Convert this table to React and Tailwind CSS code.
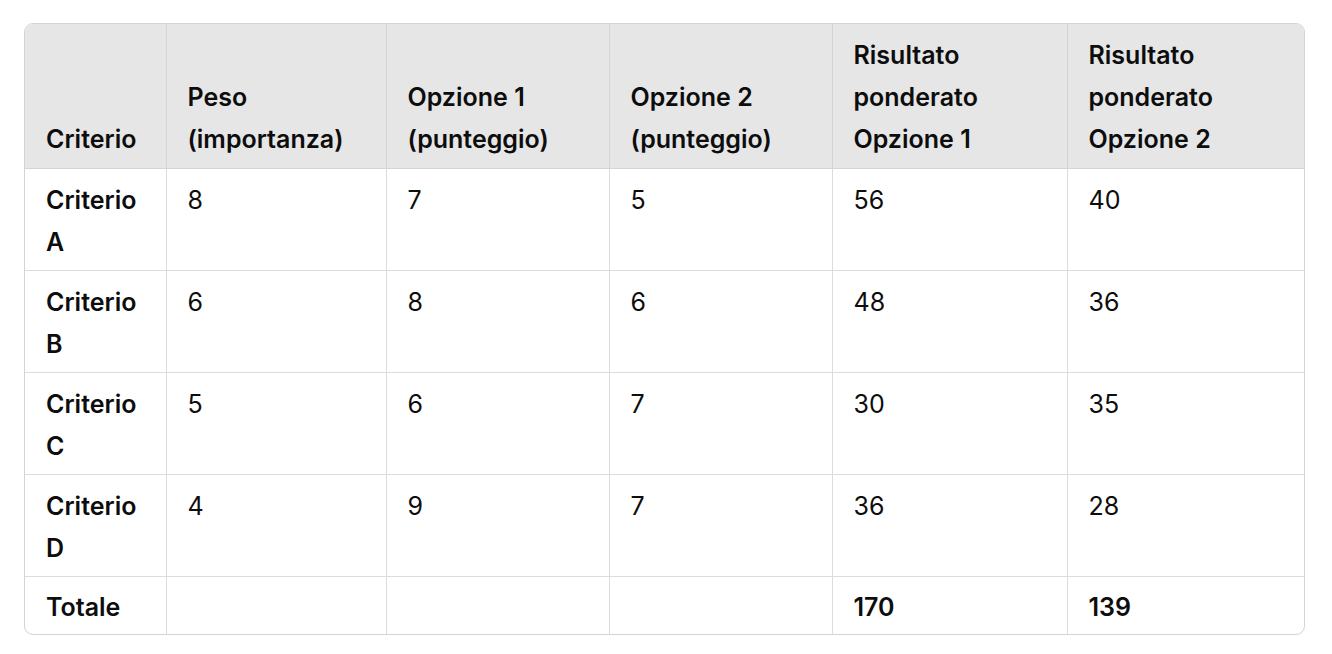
import React from "react";

const headers = [
  ["Criterio"],
  ["Peso", "(importanza)"],
  ["Opzione 1", "(punteggio)"],
  ["Opzione 2", "(punteggio)"],
  ["Risultato", "ponderato", "Opzione 1"],
  ["Risultato", "ponderato", "Opzione 2"],
];

const rows = [
  ["Criterio A", "8", "7", "5", "56", "40"],
  ["Criterio B", "6", "8", "6", "48", "36"],
  ["Criterio C", "5", "6", "7", "30", "35"],
  ["Criterio D", "4", "9", "7", "36", "28"],
];

const widths = ["w-[141px]", "w-[220px]", "w-[223px]", "w-[223px]", "w-[235px]", "w-[237px]"];

export default function App() {
  return (
    <div
      className="bg-white pl-[24px] pt-[23px] text-[#0d0d0d]"
      style={{ fontFamily: "Inter, 'Noto Sans', sans-serif" }}
    >
      <div className="w-[1281px] border border-[#d4d4d4] rounded-[9px] overflow-hidden">
        <table className="w-full table-fixed border-collapse text-[25px] leading-[42px]">
          <colgroup>
            {widths.map((w, i) => (
              <col key={i} className={w} />
            ))}
          </colgroup>
          <thead>
            <tr className="bg-[#e6e6e6]">
              {headers.map((h, i) => (
                <th
                  key={i}
                  className={`align-bottom text-left font-semibold pl-[21px] pr-[19px] pt-[10px] pb-[8px] border-b border-[#d4d4d4] ${
                    i < headers.length - 1 ? "border-r" : ""
                  }`}
                >
                  {h.map((line, j) => (
                    <div key={j}>{line}</div>
                  ))}
                </th>
              ))}
            </tr>
          </thead>
          <tbody>
            {rows.map((r, ri) => (
              <tr key={ri}>
                {r.map((c, ci) => (
                  <td
                    key={ci}
                    className={`align-top pl-[21px] pr-[19px] pt-[10px] pb-[7px] border-b border-[#dcdcdc] ${
                      ci < r.length - 1 ? "border-r" : ""
                    } ${ci === 0 ? "font-semibold" : "font-normal"}`}
                  >
                    {c}
                  </td>
                ))}
              </tr>
            ))}
            <tr>
              {["Totale", "", "", "", "170", "139"].map((c, ci) => (
                <td
                  key={ci}
                  className={`align-top font-semibold pl-[21px] pr-[19px] pt-[9px] pb-[6px] border-[#dcdcdc] ${
                    ci < 5 ? "border-r" : ""
                  }`}
                >
                  {c}
                </td>
              ))}
            </tr>
          </tbody>
        </table>
      </div>
    </div>
  );
}
